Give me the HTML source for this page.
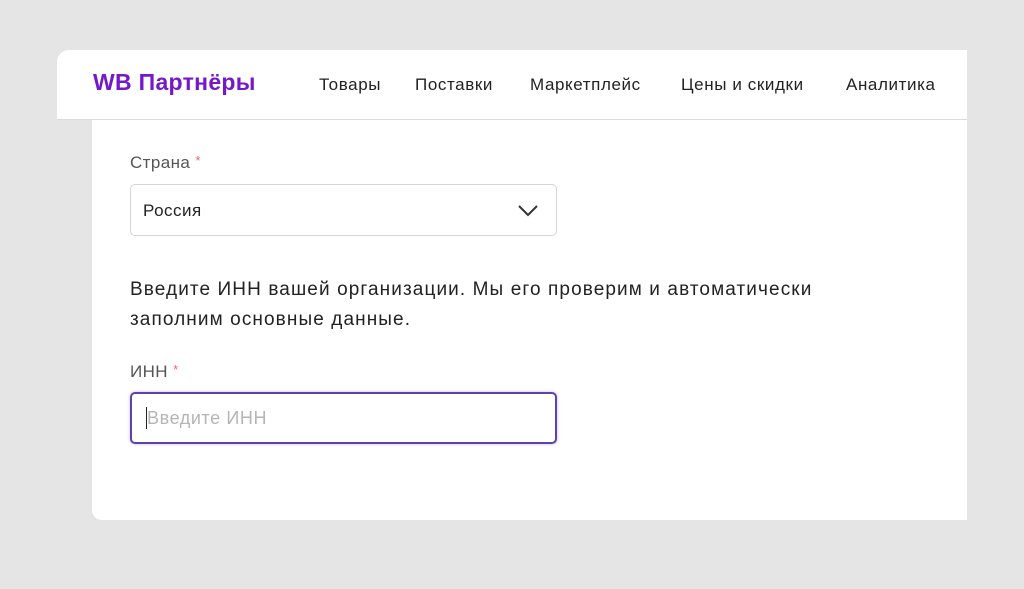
<!DOCTYPE html>
<html><head><meta charset="utf-8"><style>
body{margin:0;width:1024px;height:589px;background:#e5e5e5;font-family:"Liberation Sans",sans-serif;position:relative;overflow:hidden}
.hdr{position:absolute;left:57px;top:50px;width:910px;height:69px;background:#fff;border-radius:12px 0 0 0;border-bottom:1px solid #dcdcdc}
.logo{position:absolute;left:36px;top:19px;font-size:23px;font-weight:bold;color:#7418c9;letter-spacing:0.3px}
.nav{position:absolute;top:25px;font-size:17px;color:#222;letter-spacing:0.6px}
.body{position:absolute;left:92px;top:120px;width:875px;height:400px;background:#fff;border-radius:0 0 0 10px}
.lbl{position:absolute;left:38px;font-size:17px;color:#555;letter-spacing:0.4px}
.lbl span{color:#e66;font-size:13px;vertical-align:top}
.box{position:absolute;left:38px;width:427px;height:52px;border:1px solid #d6d6d6;border-radius:5px;box-sizing:border-box}
.txt{position:absolute;left:38px;top:155px;font-size:19px;line-height:30px;color:#222;letter-spacing:1.1px;white-space:nowrap}
</style></head><body>
<div class="hdr">
<div class="logo">WB Партнёры</div>
<div class="nav" style="left:262px">Товары</div>
<div class="nav" style="left:358px">Поставки</div>
<div class="nav" style="left:473px">Маркетплейс</div>
<div class="nav" style="left:624px">Цены и скидки</div>
<div class="nav" style="left:789px">Аналитика</div>
</div>
<div class="body">
<div class="lbl" style="top:33px">Страна <span>*</span></div>
<div class="box" style="top:64px"><div style="position:absolute;left:12px;top:16px;font-size:17px;color:#222;letter-spacing:0.5px">Россия</div>
<svg style="position:absolute;left:386px;top:19px" width="22" height="14"><path d="M2 2 L11 11 L20 2" fill="none" stroke="#333" stroke-width="2"/></svg></div>
<div class="txt">Введите ИНН вашей организации. Мы его проверим и автоматически<br>заполним основные данные.</div>
<div class="lbl" style="top:242px">ИНН <span>*</span></div>
<div class="box" style="top:272px;border:2px solid #5e43a6;box-shadow:0 0 3px #c8b8ee"><div style="position:absolute;left:14px;top:13px;width:1px;height:22px;background:#222"></div><div style="position:absolute;left:15px;top:14px;font-size:18px;color:#b5b5b5;letter-spacing:0.6px">Введите ИНН</div></div>
</div>
</body></html>
